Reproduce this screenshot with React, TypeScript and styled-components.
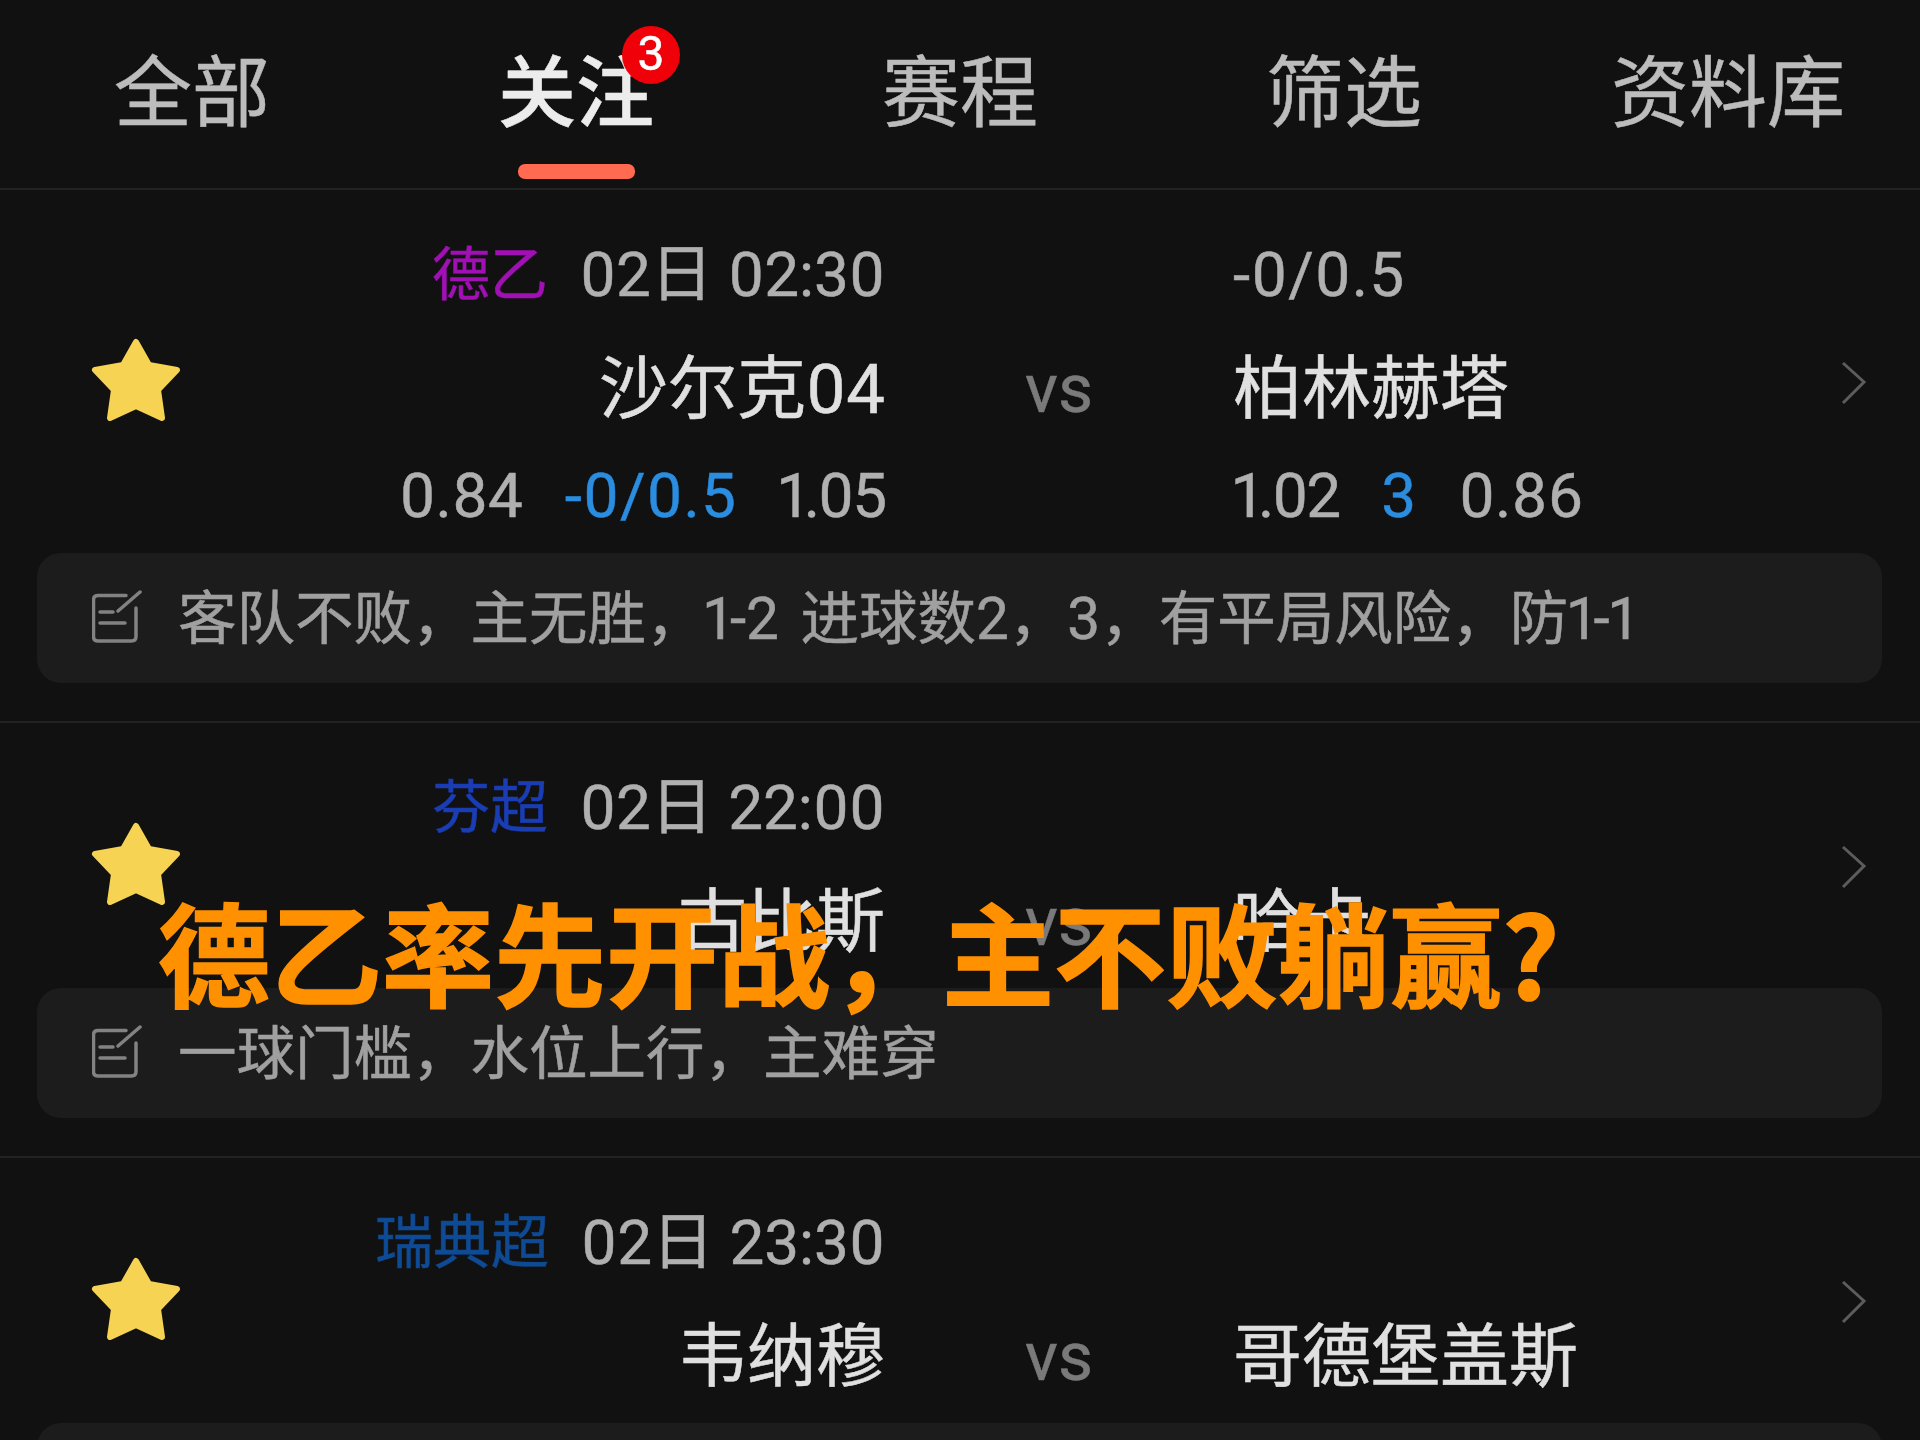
import React from 'react';
import styled, { createGlobalStyle } from 'styled-components';

const FONT = `Roboto, "Noto Sans CJK SC", sans-serif`;

const GlobalStyle = createGlobalStyle`
  html, body {
    margin: 0;
    padding: 0;
    background: #111111;
    font-family: ${FONT};
    font-variant-numeric: proportional-nums;
  }
`;

const Page = styled.div`
  position: relative;
  width: 1920px;
  height: 1440px;
  overflow: hidden;
  background: #111111;
`;

const Content = styled.div`
  filter: blur(0.6px);
  -webkit-text-stroke: 0.5px;
`;

const TabBar = styled.div`
  display: flex;
  height: 190px;
  padding-top: 40px;
  box-sizing: border-box;
  border-bottom: 2px solid #222222;
`;

const Tab = styled.div`
  flex: 1;
  display: flex;
  flex-direction: column;
  align-items: center;
`;

const TabLabel = styled.div<{ $active: boolean }>`
  position: relative;
  font-size: 78px;
  font-weight: ${({ $active }) => ($active ? 500 : 400)};
  line-height: 110px;
  color: ${({ $active }) => ($active ? '#ececec' : '#bcbcbc')};
`;

const TabBarMark = styled.div<{ $active: boolean }>`
  width: 117px;
  height: 15px;
  margin-top: 14px;
  border-radius: 7px;
  background: ${({ $active }) => ($active ? '#ff6a50' : 'transparent')};
`;

const Badge = styled.span`
  position: absolute;
  left: 124px;
  top: -14px;
  width: 58px;
  height: 58px;
  border-radius: 50%;
  background: #f00008;
  color: #fff;
  font-size: 48px;
  font-weight: 400;
  line-height: 56px;
  text-align: center;
`;

const Match = styled.div`
  padding: 42px 38px 38px 37px;
  border-bottom: 2px solid #222222;
`;

const MatchGrid = styled.div<{ $hasOdds: boolean }>`
  display: grid;
  grid-template-columns: 90px 704px 348px 608px 26px;
  grid-template-rows: ${({ $hasOdds }) => ($hasOdds ? '96px 124px 98px' : '96px 124px')};
  padding-left: 54px;
`;

const StarCell = styled.div`
  grid-column: 1;
  grid-row: 1 / -1;
  align-self: center;
  margin-top: -24px;
  line-height: 0;
`;

const ChevronCell = styled.div`
  grid-column: 5;
  grid-row: 1 / -1;
  align-self: center;
  margin-top: -17px;
  line-height: 0;
`;

const MetaLine = styled.div<{ $side: 'home' | 'away' }>`
  grid-column: ${({ $side }) => ($side === 'home' ? 2 : 4)};
  grid-row: 1;
  display: flex;
  align-items: center;
  align-self: start;
  justify-content: ${({ $side }) => ($side === 'home' ? 'flex-end' : 'flex-start')};
  gap: 32px;
  font-size: 62px;
  line-height: 86px;
  color: #b0b0b0;
`;

const League = styled.span<{ $color: string }>`
  font-size: 58px;
  color: ${({ $color }) => $color};
`;

const LineValue = styled.span`
  letter-spacing: 1px;
`;

const TeamName = styled.div<{ $side: 'home' | 'away' }>`
  grid-column: ${({ $side }) => ($side === 'home' ? 2 : 4)};
  grid-row: 2;
  text-align: ${({ $side }) => ($side === 'home' ? 'right' : 'left')};
  font-size: 69px;
  line-height: 124px;
  color: #e0e0e0;
`;

const Versus = styled.div`
  grid-column: 3;
  grid-row: 2;
  align-self: center;
  margin-top: -2px;
  text-align: center;
  font-size: 68px;
  line-height: 112px;
  color: #7a7a7a;
`;

const OddsLine = styled.div<{ $side: 'home' | 'away' }>`
  grid-column: ${({ $side }) => ($side === 'home' ? 2 : 4)};
  grid-row: 3;
  display: flex;
  align-self: start;
  justify-content: ${({ $side }) => ($side === 'home' ? 'flex-end' : 'flex-start')};
  gap: 42px;
  font-size: 62px;
  line-height: 88px;
  color: #b0b0b0;
`;

const OddsValue = styled.span<{ $narrow: boolean }>`
  letter-spacing: ${({ $narrow }) => ($narrow ? '-2px' : '0')};
`;

const Handicap = styled.span`
  letter-spacing: 1px;
  color: #2a8de0;
`;

const Note = styled.div`
  display: flex;
  align-items: center;
  gap: 36px;
  height: 130px;
  box-sizing: border-box;
  margin-top: 3px;
  padding: 0 0 9px 55px;
  border-radius: 24px;
  background: #1c1c1c;
  font-size: 58.5px;
  word-spacing: 7px;
  color: #a0a0a0;
  white-space: nowrap;
`;

const NoteGlyph = styled.svg`
  flex: none;
  margin-top: 7px;
`;

const Caption = styled.div`
  position: absolute;
  left: 158px;
  top: 882px;
  font-family: "Noto Sans CJK SC", sans-serif;
  font-weight: 700;
  font-size: 112px;
  line-height: 136px;
  color: #ff9000;
  -webkit-text-stroke: 1.5px #ff9000;
  white-space: nowrap;
`;

const StarIcon = () => (
  <svg width="90" height="85" viewBox="0 0 90 85">
    <polygon
      points="45,5 58,28 86,33 67,53 71,81 45,69 19,81 23,53 4,33 32,28"
      fill="#f6d353"
      stroke="#f6d353"
      strokeWidth="6"
      strokeLinejoin="round"
    />
  </svg>
);

const ChevronIcon = () => (
  <svg width="26" height="44" viewBox="0 0 26 44" fill="none">
    <path d="M2 2 L23 21 L2 42" stroke="#5c5c5c" strokeWidth="3" />
  </svg>
);

const NoteIcon = () => (
  <NoteGlyph width="50" height="54" viewBox="0 0 50 54" fill="none" stroke="#828282" strokeWidth="3.5" strokeLinecap="round">
    <path d="M34 5.5 H6 Q1.5 5.5 1.5 10 V46.5 Q1.5 51 6 51 H39.5 Q44 51 44 46.5 V18" />
    <path d="M26 21 L48 2" />
    <path d="M8 22 H21" />
    <path d="M8 33 H33" />
  </NoteGlyph>
);

type Odds = [string, string, string];

type MatchItem = {
  league: string;
  leagueColor: string;
  time: string;
  home: string;
  away: string;
  line?: string;
  homeOdds?: Odds;
  awayOdds?: Odds;
  note: string;
};

const TABS = ['全部', '关注', '赛程', '筛选', '资料库'];

const MATCHES: MatchItem[] = [
  {
    league: '德乙',
    leagueColor: '#a010b4',
    time: '02日 02:30',
    home: '沙尔克04',
    away: '柏林赫塔',
    line: '-0/0.5',
    homeOdds: ['0.84', '-0/0.5', '1.05'],
    awayOdds: ['1.02', '3', '0.86'],
    note: '客队不败，主无胜，1-2 进球数2，3，有平局风险，防1-1',
  },
  {
    league: '芬超',
    leagueColor: '#1a3db4',
    time: '02日 22:00',
    home: '古比斯',
    away: '哈卡',
    note: '一球门槛，水位上行，主难穿',
  },
  {
    league: '瑞典超',
    leagueColor: '#0f4a94',
    time: '02日 23:30',
    home: '韦纳穆',
    away: '哥德堡盖斯',
    note: '',
  },
];

const OddsCells = ({ side, odds }: { side: 'home' | 'away'; odds: Odds }) => (
  <OddsLine $side={side}>
    <OddsValue $narrow={odds[0].startsWith('1')}>{odds[0]}</OddsValue>
    <Handicap>{odds[1]}</Handicap>
    <OddsValue $narrow={odds[2].startsWith('1')}>{odds[2]}</OddsValue>
  </OddsLine>
);

const MatchRow = ({ item }: { item: MatchItem }) => (
  <Match>
    <MatchGrid $hasOdds={!!item.homeOdds}>
      <StarCell>
        <StarIcon />
      </StarCell>
      <MetaLine $side="home">
        <League $color={item.leagueColor}>{item.league}</League>
        <span>{item.time}</span>
      </MetaLine>
      <MetaLine $side="away">
        <LineValue>{item.line}</LineValue>
      </MetaLine>
      <TeamName $side="home">{item.home}</TeamName>
      <Versus>vs</Versus>
      <TeamName $side="away">{item.away}</TeamName>
      {item.homeOdds && <OddsCells side="home" odds={item.homeOdds} />}
      {item.awayOdds && <OddsCells side="away" odds={item.awayOdds} />}
      <ChevronCell>
        <ChevronIcon />
      </ChevronCell>
    </MatchGrid>
    <Note>
      <NoteIcon />
      {item.note}
    </Note>
  </Match>
);

const App = () => (
  <Page>
    <GlobalStyle />
    <Content>
      <TabBar>
        {TABS.map((tab, i) => (
          <Tab key={tab}>
            <TabLabel $active={i === 1}>
              {tab}
              {i === 1 && <Badge>3</Badge>}
            </TabLabel>
            <TabBarMark $active={i === 1} />
          </Tab>
        ))}
      </TabBar>
      {MATCHES.map(item => (
        <MatchRow key={item.home} item={item} />
      ))}
    </Content>
    <Caption>德乙率先开战，主不败躺赢?</Caption>
  </Page>
);

export default App;
